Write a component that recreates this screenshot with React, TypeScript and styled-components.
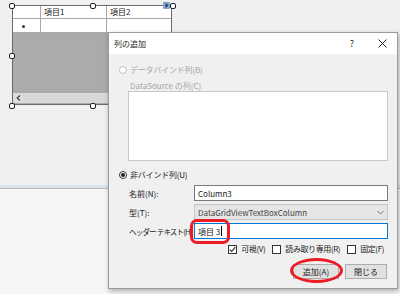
import React from "react";
import styled, { createGlobalStyle } from "styled-components";

const GlobalStyle = createGlobalStyle`
  html, body {
    margin: 0;
    padding: 0;
  }
  body {
    background: #f0f0f0;
    font-family: "Noto Sans CJK JP", "Noto Sans", sans-serif;
    color: #1a1a1a;
  }
`;

const Page = styled.div`
  position: relative;
  width: 400px;
  height: 294px;
  overflow: hidden;
  display: flex;
  flex-direction: column;
`;

const DesignSurface = styled.div`
  position: relative;
  height: 185px;
  background: #f0f0f0;
`;

const Splitter = styled.div`
  height: 3px;
  background: #dae4f0;
  border-bottom: 1px solid #b9b9b9;
`;

const LowerPane = styled.div`
  flex: 1;
  background: #f6f6f6;
`;

/* ---- designer grid ---- */

const GridControl = styled.div`
  position: absolute;
  left: 12px;
  top: 5px;
  width: 160px;
  height: 100px;
  box-sizing: border-box;
  border: 1px solid #6a6a6a;
  background: #ababab;
  display: flex;
  flex-direction: column;
`;

const GridTable = styled.div`
  display: grid;
  grid-template-columns: 28px 66px 1fr;
  grid-template-rows: 13px 14px;
  background: #fff;
`;

const Cell = styled.div<{ $last?: boolean }>`
  box-sizing: border-box;
  border-right: ${(p) => (p.$last ? "none" : "1px solid #a8a8a8")};
  border-bottom: 1px solid #a8a8a8;
  font-size: 8px;
  line-height: 12px;
  padding-left: 3px;
  white-space: nowrap;
  overflow: hidden;
`;

const NewRowMark = styled.span`
  display: block;
  width: 3px;
  height: 3px;
  margin: 6px 0 0 6px;
  border-radius: 50%;
  background: #333;
`;

const HScroll = styled.div`
  margin-top: auto;
  margin-bottom: 1px;
  height: 10px;
  background: #d8d8d8;
  display: flex;
  align-items: center;
`;

const ScrollArrow = styled.div`
  width: 10px;
  height: 10px;
  display: flex;
  align-items: center;
  justify-content: center;
  background: #dcdcdc;
`;

const Handle = styled.span<{ $x: number; $y: number }>`
  position: absolute;
  left: ${(p) => p.$x - 3}px;
  top: ${(p) => p.$y - 3}px;
  width: 6px;
  height: 6px;
  box-sizing: border-box;
  border: 1px solid #222;
  border-radius: 2px;
  background: #fff;
`;

const SmartTag = styled.span`
  position: absolute;
  left: 150px;
  top: -4px;
  width: 7px;
  height: 7px;
  border-radius: 1px;
  background: #8aa6c8;
  display: flex;
  align-items: center;
  justify-content: center;
`;

/* ---- dialog ---- */

const Dialog = styled.div`
  position: absolute;
  left: 108px;
  top: 32px;
  width: 290px;
  height: 257px;
  box-sizing: border-box;
  border: 1px solid #9c9c9c;
  background: #f0f0f0;
  box-shadow: 1px 2px 5px rgba(0, 0, 0, 0.3);
  display: flex;
  flex-direction: column;
`;

const TitleBar = styled.div`
  height: 21px;
  background: #fff;
  display: flex;
  align-items: center;
  padding-left: 5px;
  font-size: 8px;
`;

const TitleText = styled.span`
  flex: 1;
`;

const TitleButton = styled.span`
  width: 30px;
  display: flex;
  justify-content: center;
  align-items: center;
  font-size: 9px;
  color: #222;
`;

const Body = styled.div`
  flex: 1;
  display: flex;
  flex-direction: column;
  padding: 0 9px 0 9px;
  font-size: 8px;
`;

const RadioRow = styled.label<{ $top: number; $disabled?: boolean }>`
  margin-top: ${(p) => p.$top}px;
  padding-left: 1px;
  height: 10px;
  display: flex;
  align-items: center;
  gap: 3px;
  color: ${(p) => (p.$disabled ? "#a6a6a6" : "#1a1a1a")};
  line-height: 10px;
  letter-spacing: -0.2px;
`;

const RadioDot = styled.span<{ $checked?: boolean; $disabled?: boolean }>`
  width: 8px;
  height: 8px;
  box-sizing: border-box;
  border-radius: 50%;
  border: 1px solid ${(p) => (p.$disabled ? "#c4c4c4" : "#333")};
  background: #fff;
  display: flex;
  align-items: center;
  justify-content: center;
  &::after {
    content: "";
    width: 4px;
    height: 4px;
    border-radius: 50%;
    background: ${(p) => (p.$checked ? "#222" : "transparent")};
  }
`;

const SubLabel = styled.div`
  margin: 6px 0 0 12px;
  height: 10px;
  line-height: 10px;
  color: #a6a6a6;
`;

const ListBox = styled.div`
  margin-left: 10px;
  width: 260px;
  height: 70px;
  box-sizing: border-box;
  border: 1px solid #c8c8c8;
  background: #fff;
`;

const FormStack = styled.div`
  margin-top: 5px;
  display: flex;
  flex-direction: column;
  gap: 3px;
`;

const FormRow = styled.div`
  display: flex;
  align-items: center;
  height: 16px;
  padding-left: 11px;
`;

const FieldLabel = styled.span<{ $tight?: boolean }>`
  width: 65px;
  flex-shrink: 0;
  white-space: nowrap;
  font-size: ${(p) => (p.$tight ? "7.5px" : "8px")};
  letter-spacing: ${(p) => (p.$tight ? "-0.8px" : "0")};
`;

const TextBox = styled.div<{ $focused?: boolean }>`
  width: 194px;
  height: 16px;
  box-sizing: border-box;
  border: 1px solid ${(p) => (p.$focused ? "#0078d7" : "#7a7a7a")};
  background: #fff;
  display: flex;
  align-items: center;
  padding-left: 3px;
  white-space: nowrap;
`;

const Caret = styled.span`
  display: inline-block;
  width: 1px;
  height: 10px;
  margin-left: 1px;
  background: #000;
`;

const ComboBox = styled.div`
  width: 194px;
  height: 16px;
  box-sizing: border-box;
  border: 1px solid #c6c6c6;
  background: #e5e5e5;
  display: flex;
  align-items: center;
  padding: 0 3px;
  color: #444;
`;

const ComboText = styled.span`
  flex: 1;
`;

const CheckRow = styled.div`
  margin-top: 5px;
  height: 10px;
  display: flex;
  justify-content: flex-end;
  gap: 7px;
  padding-right: 4px;
`;

const CheckItem = styled.label`
  display: flex;
  align-items: center;
  gap: 4px;
  line-height: 10px;
  white-space: nowrap;
  letter-spacing: -0.4px;
`;

const CheckBoxMark = styled.span`
  width: 9px;
  height: 9px;
  box-sizing: border-box;
  border: 1px solid #333;
  background: #fff;
  display: flex;
  align-items: center;
  justify-content: center;
`;

const ButtonRow = styled.div`
  margin-top: 10px;
  padding-right: 1px;
  display: flex;
  justify-content: flex-end;
  gap: 6px;
`;

const Button = styled.button<{ $w: number }>`
  width: ${(p) => p.$w}px;
  height: 15px;
  padding: 0;
  box-sizing: border-box;
  border: 1px solid #adadad;
  background: #e1e1e1;
  font-family: inherit;
  font-size: 8px;
  color: #1a1a1a;
  line-height: 13px;
`;

/* ---- annotations ---- */

const MarkBox = styled.div`
  position: absolute;
  left: 190px;
  top: 219px;
  width: 40px;
  height: 25px;
  box-sizing: border-box;
  border: 3px solid #ec1c24;
  border-radius: 7px;
`;

const MarkEllipse = styled.div`
  position: absolute;
  left: 290px;
  top: 258px;
  width: 53px;
  height: 25px;
  box-sizing: border-box;
  border: 3px solid #ec1c24;
  border-radius: 50%;
`;

const Check = () => (
  <svg width={7} height={7} viewBox="0 0 7 7">
    <path d="M0.8 3.6 L2.7 5.5 L6.2 1.2" fill="none" stroke="#222" strokeWidth={1.1} />
  </svg>
);

const App = () => (
  <Page>
    <GlobalStyle />
    <DesignSurface>
      <GridControl>
        <GridTable>
          <Cell />
          <Cell>項目1</Cell>
          <Cell $last>項目2</Cell>
          <Cell>
            <NewRowMark />
          </Cell>
          <Cell />
          <Cell $last />
        </GridTable>
        <HScroll>
          <ScrollArrow>
            <svg width={5} height={6} viewBox="0 0 5 6">
              <path d="M4 0.5 L1.2 3 L4 5.5" fill="none" stroke="#444" strokeWidth={1.2} />
            </svg>
          </ScrollArrow>
        </HScroll>
        <SmartTag>
          <svg width={4} height={5} viewBox="0 0 4 5">
            <path d="M0.5 0 L3.5 2.5 L0.5 5 Z" fill="#1e3c6e" />
          </svg>
        </SmartTag>
        <Handle $x={-1} $y={0} />
        <Handle $x={80} $y={0} />
        <Handle $x={160} $y={0} />
        <Handle $x={-1} $y={50} />
        <Handle $x={-1} $y={100} />
        <Handle $x={80} $y={100} />
        <Handle $x={160} $y={100} />
      </GridControl>
    </DesignSurface>
    <Splitter />
    <LowerPane />

    <Dialog>
      <TitleBar>
        <TitleText>列の追加</TitleText>
        <TitleButton>?</TitleButton>
        <TitleButton>
          <svg width={9} height={9} viewBox="0 0 9 9">
            <path d="M0.5 0.5 L8.5 8.5 M8.5 0.5 L0.5 8.5" stroke="#222" strokeWidth={1} />
          </svg>
        </TitleButton>
      </TitleBar>
      <Body>
        <RadioRow $top={11} $disabled>
          <RadioDot $disabled />
          データバインド列(B)
        </RadioRow>
        <SubLabel>DataSource の列(C)</SubLabel>
        <ListBox />
        <RadioRow $top={9}>
          <RadioDot $checked />
          非バインド列(U)
        </RadioRow>
        <FormStack>
          <FormRow>
            <FieldLabel>名前(N):</FieldLabel>
            <TextBox>Column3</TextBox>
          </FormRow>
          <FormRow>
            <FieldLabel>型(T):</FieldLabel>
            <ComboBox>
              <ComboText>DataGridViewTextBoxColumn</ComboText>
              <svg width={7} height={5} viewBox="0 0 7 5">
                <path d="M0.5 1 L3.5 4 L6.5 1" fill="none" stroke="#777" strokeWidth={1} />
              </svg>
            </ComboBox>
          </FormRow>
          <FormRow>
            <FieldLabel $tight>ヘッダー テキスト(H):</FieldLabel>
            <TextBox $focused>
              項目 3<Caret />
            </TextBox>
          </FormRow>
        </FormStack>
        <CheckRow>
          <CheckItem>
            <CheckBoxMark>
              <Check />
            </CheckBoxMark>
            可視(V)
          </CheckItem>
          <CheckItem>
            <CheckBoxMark />
            読み取り専用(R)
          </CheckItem>
          <CheckItem>
            <CheckBoxMark />
            固定(F)
          </CheckItem>
        </CheckRow>
        <ButtonRow>
          <Button $w={46}>追加(A)</Button>
          <Button $w={42}>閉じる</Button>
        </ButtonRow>
      </Body>
    </Dialog>

    <MarkBox />
    <MarkEllipse />
  </Page>
);

export default App;
